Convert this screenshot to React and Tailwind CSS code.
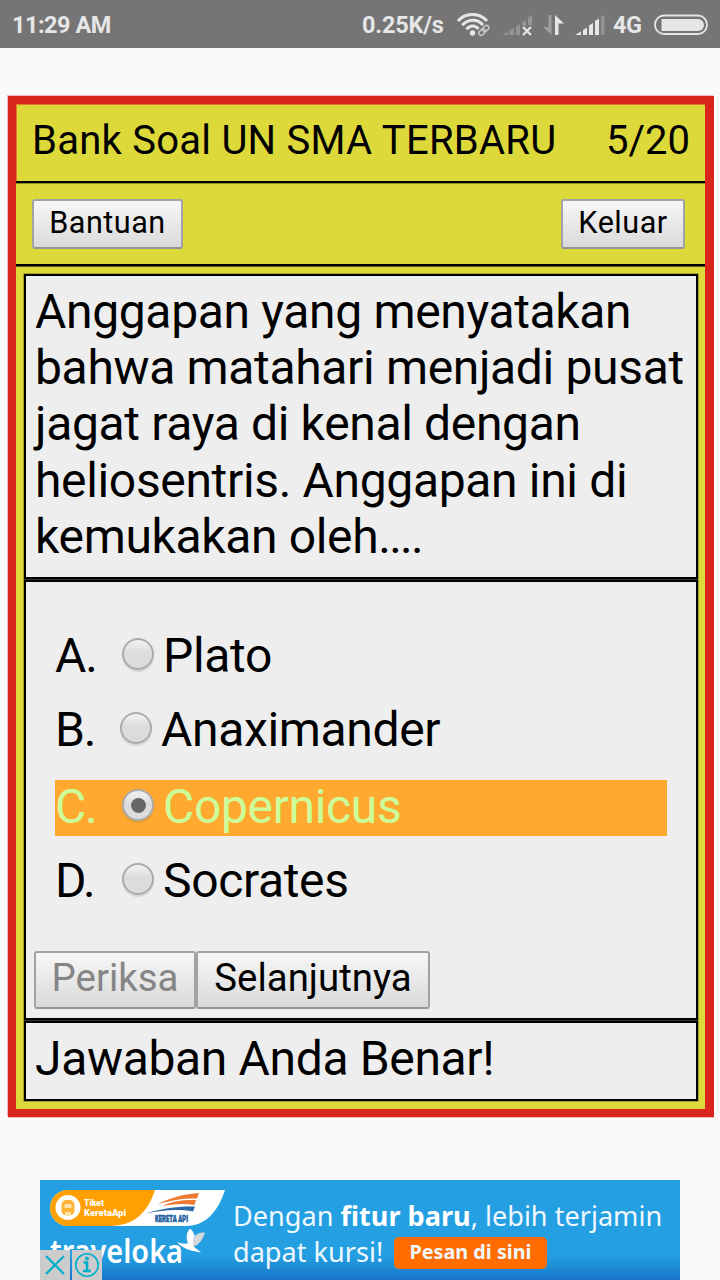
import clsx from 'clsx'

const options = [
  { letter: 'A', label: 'Plato', row: 'mb-[18px]', radio: 'ml-[26px]' },
  { letter: 'B', label: 'Anaximander', row: 'mb-[21px]', radio: 'ml-6' },
  { letter: 'C', label: 'Copernicus', selected: true, row: 'mb-[18px]', radio: 'ml-[26px]' },
  { letter: 'D', label: 'Socrates', row: '', radio: 'ml-[26px]' }
]

const WifiIcon = () => (
  <svg className="ml-[13px] h-6 w-[33px]" viewBox="0 0 33 24" fill="none" stroke="#e6e6e6" strokeWidth="3">
    <path d="M1 8C8.500-.8 22.500-.8 30 8" />
    <path d="M5.200 12.300C10.800 5.600 20.500 5.600 26 12" />
    <path d="M9.500 16.300C13 12 18.200 12 21.500 16" />
    <circle cx="15.500" cy="20" r="2.700" fill="#e6e6e6" stroke="none" />
    <g stroke="#c4c4c4" strokeWidth="1.500" transform="rotate(-45 27 17.500)">
      <rect x="21" y="15" width="7" height="4.600" rx="2.300" />
      <rect x="26" y="15" width="7" height="4.600" rx="2.300" />
    </g>
  </svg>
)

const NoSignalIcon = () => (
  <svg className="ml-3 h-6 w-8" viewBox="0 0 32 24">
    <g fill="#949494">
      <path d="M0 22 6 18.500V22H0Z" />
      <path d="M7.500 17.500 12 15V22H7.500Z" />
      <path d="M14 13.500 18 11V22H14Z" />
      <path d="M20 9.500 24 7V14L20 11.500Z" />
      <path d="M26 4.500 30 2V12H26Z" />
    </g>
    <path d="m21 14 8 8m0-8-8 8" stroke="#e6e6e6" strokeWidth="2.200" />
  </svg>
)

const DataIcon = () => (
  <svg className="ml-[9px] h-6 w-[22px]" viewBox="0 0 22 24">
    <path d="M5.500 2H8.500V22L0 14H5.500Z" fill="#a0a0a0" />
    <path d="M12 2 21 10.500H15.500V22H12Z" fill="#e6e6e6" />
  </svg>
)

const SignalIcon = () => (
  <svg className="ml-[10px] h-6 w-[30px]" viewBox="0 0 30 24" fill="#e6e6e6">
    <path d="M0 22 6 18.500V22H0Z" />
    <path d="M8 17 12 14.500V22H8Z" />
    <path d="M14 12.500 18 10V22H14Z" />
    <path d="M20 8 24 5.500V22H20Z" />
    <path d="M26 4 29.500 2V22H26Z" fill="#949494" />
  </svg>
)

const BatteryIcon = () => (
  <svg className="ml-[13px] h-[22px] w-[54px]" viewBox="0 0 54 22">
    <rect x="1" y="1.500" width="52" height="18.500" rx="9.200" fill="none" stroke="#e6e6e6" strokeWidth="1.800" />
    <path d="M7.500 5H44a6 6 0 0 1 0 12H7.500Z" fill="#e6e6e6" />
  </svg>
)

const StatusBar = () => (
  <div className="flex h-12 shrink-0 items-center bg-[#757575] pt-0.5 pl-3 text-[23.5px] font-bold text-[#e6e6e6]">
    <span className="w-[350px] pt-0.5 tracking-[-0.5px]">11:29 AM</span>
    <span className="w-[82px] whitespace-nowrap pt-0.5 tracking-[-0.2px]">0.25K/s</span>
    <WifiIcon />
    <NoSignalIcon />
    <DataIcon />
    <SignalIcon />
    <span className="ml-2 w-7 pt-0.5 tracking-[-0.6px]">4G</span>
    <BatteryIcon />
  </div>
)

const QuizButton = ({ className, disabled, children }) => (
  <button
    disabled={disabled}
    className={clsx(
      'flex items-center justify-center rounded-[3px] border-2 border-[#a3a3a3] border-b-[#949494] bg-linear-to-b from-[#f7f7f7] to-[#dadada]',
      disabled ? 'text-[#858585]' : 'text-black',
      className
    )}
  >
    {children}
  </button>
)

const Radio = ({ checked, className }) => (
  <span
    className={clsx(
      'flex h-8 w-8 items-center justify-center rounded-full border-2 border-[#ababab] bg-linear-to-b from-[#eeeeee] from-10% to-[#dcdcdc] to-45% shadow-[0_2px_1px_rgba(0,0,0,0.1)]',
      className
    )}
  >
    {checked && <span className="h-[15px] w-[15px] rounded-full bg-[#666666]" />}
  </span>
)

const AdBanner = () => (
  <div className="relative ml-10 mt-[63px] flex h-[100px] w-[640px] shrink-0 overflow-hidden bg-linear-to-b from-[#249fe2] from-75% to-[#1976c9] text-white">
    <svg className="h-[100px] w-[193px] shrink-0" viewBox="0 0 193 100">
      <path d="M28 10H185C178 32 165 46 146 46H28A18 18 0 0 1 28 10Z" fill="#fff" />
      <path d="M28 10H115C108 32 94 46 70 46H28A18 18 0 0 1 28 10Z" fill="#ff9f00" />
      <circle cx="28" cy="27.500" r="12.500" fill="#fff" />
      <rect x="21.500" y="20" width="13" height="15.500" rx="5" fill="#ffb335" />
      <path d="M24.500 24h7v4h-7ZM25 32h6v3.500h-6Z" fill="#ffe3b0" />
      <text x="44" y="26" fontSize="9.500" fontWeight="900" fill="#fff" textLength="20" lengthAdjust="spacingAndGlyphs">Tiket</text>
      <text x="44" y="35.500" fontSize="9.500" fontWeight="900" fill="#fff" textLength="42" lengthAdjust="spacingAndGlyphs">KeretaApi</text>
      <path d="M118 24C132 17 145 14 159 13L157 18.500C144 18 132 20 118 24Z" fill="#ef7b33" />
      <path d="M122 26C135 20 145 20 156 20L154.500 25C144 23 134 24 122 26Z" fill="#ef7b33" />
      <path d="M106 33.500C122 28 139 26 155 26.500L153 31.500C139 29 122 30 106 33.500Z" fill="#2d68a5" />
      <text x="115" y="41.500" fontSize="8.500" fontWeight="900" fill="#235f9f" stroke="#235f9f" strokeWidth="0.500" textLength="33" lengthAdjust="spacingAndGlyphs">KERETA API</text>
      <text x="10" y="83" className="font-['Noto_Sans']" fontSize="32" fontWeight="600" fill="#fff" textLength="133" lengthAdjust="spacingAndGlyphs">traveloka</text>
      <path d="M137 62C142 64 146 64 148 63C146 58 146 53 150 48.500C154 52 155 56 155 60L153 66L161 72.500C153 71 144 70 137 62Z" fill="#fff" />
      <path d="M153 58C156 54 159 52.500 165 52.500C163 59 160 64 153 67Z" fill="#d4d8db" />
    </svg>
    <div className="flex flex-col whitespace-nowrap pt-[18px] font-['Noto_Sans'] text-[27.1px] leading-9 text-[#f0f8fe]">
      <div>
        Dengan <b className="text-white">fitur baru</b>, lebih terjamin
      </div>
      <div className="flex items-center">
        <span className="w-[161px]">dapat kursi!</span>
        <span className="mt-0.5 flex h-8 w-[153px] items-center justify-center rounded-[5px] bg-[#ff6d00] pb-0.5 text-[19.8px] font-bold">
          Pesan di sini
        </span>
      </div>
    </div>
    <div className="absolute bottom-0 left-0 flex gap-0.5">
      <svg className="h-[30px] w-[30px] bg-[#cccccc]" viewBox="0 0 30 30">
        <path d="m6 6 18 18M24 6 6 24" stroke="#00aecd" strokeWidth="2.200" />
      </svg>
      <svg className="h-[30px] w-[30px] bg-[#cccccc]" viewBox="0 0 30 30" fill="none" stroke="#00aecd">
        <circle cx="15" cy="15" r="11.200" strokeWidth="1.600" />
        <path d="M11.500 12.500h3.500V21M11 21h8" strokeWidth="2.600" />
        <circle cx="15" cy="8.500" r="1.900" fill="#00aecd" stroke="none" />
      </svg>
    </div>
  </div>
)

const App = () => {
  return (
    <div className="flex h-[1280px] w-[720px] flex-col overflow-hidden bg-[#fafafa] font-['Roboto',sans-serif] text-black">
      <StatusBar />

      <div className="ml-2 mt-12 h-[1021px] w-[706px] shrink-0 border-8 border-r-[9px] border-[#da251c] bg-[#ded93b] shadow-[-1px_-1px_0_#e9b9bd,0_1px_0_#f5b5b3]">
        {/* Title */}
        <div className="flex h-[79px] items-center justify-between whitespace-nowrap border-b-2 border-black pb-1 pl-4 pr-[15px] text-[40px] shadow-[0_1px_0_#8f8b26,inset_1px_1px_0_#dd7a2c]">
          <span className="tracking-[0.25px]">Bank Soal UN SMA TERBARU</span>
          <span>5/20</span>
        </div>

        {/* Toolbar */}
        <div className="flex h-[83px] justify-between border-b-2 border-black pl-4 pr-5 pt-4 text-[30.6px] tracking-[0.5px] shadow-[0_1px_0_#5f5c1c]">
          <QuizButton className="h-[50px] w-[151px] pb-0.5">Bantuan</QuizButton>
          <QuizButton className="h-[50px] w-[124px] pb-0.5">Keluar</QuizButton>
        </div>

        <div className="ml-2 mt-2 flex w-[674px] flex-col gap-px bg-[#333333] text-[48px] tracking-[-0.34px] shadow-[0_0_0_0.500px_#6b6820]">
          {/* Question */}
          <div className="h-[305px] whitespace-nowrap border-2 border-black bg-[#eeeeee] pl-[9px] pt-2 leading-[56.200px]">
            Anggapan yang menyatakan<br />
            bahwa matahari menjadi pusat<br />
            jagat raya di kenal dengan<br />
            heliosentris. Anggapan ini di<br />
            kemukakan oleh<span className="tracking-[-1.8px]">....</span>
          </div>

          {/* Answers */}
          <div className="h-[440px] border-2 border-black bg-[#eeeeee] pl-[9px] pt-[47px]">
            <ul className="ml-5 w-[612px]">
              {options.map(option => (
                <li
                  key={option.letter}
                  className={clsx(
                    'flex h-14 leading-[54px]',
                    option.row,
                    option.selected && 'bg-[#ffa931] text-[#ccff99]'
                  )}
                >
                  <span className="w-[41px] tracking-[-1.2px]">{option.letter}.</span>
                  <Radio checked={option.selected} className={clsx('mt-[9px]', option.radio)} />
                  <span className="ml-[9px]">{option.label}</span>
                </li>
              ))}
            </ul>
            <div className="mt-[41px] -ml-px flex text-[38.400px] tracking-normal">
              <QuizButton disabled className="h-[58px] w-[162px] pb-1">Periksa</QuizButton>
              <QuizButton className="h-[58px] w-[234px] pb-1">Selanjutnya</QuizButton>
            </div>
          </div>

          {/* Result */}
          <div className="h-20 border-2 border-black bg-[#eeeeee] pl-[9px] pt-2 leading-14">
            Jawaban Anda Benar!
          </div>
        </div>
      </div>

      <AdBanner />
    </div>
  )
}

export default App
